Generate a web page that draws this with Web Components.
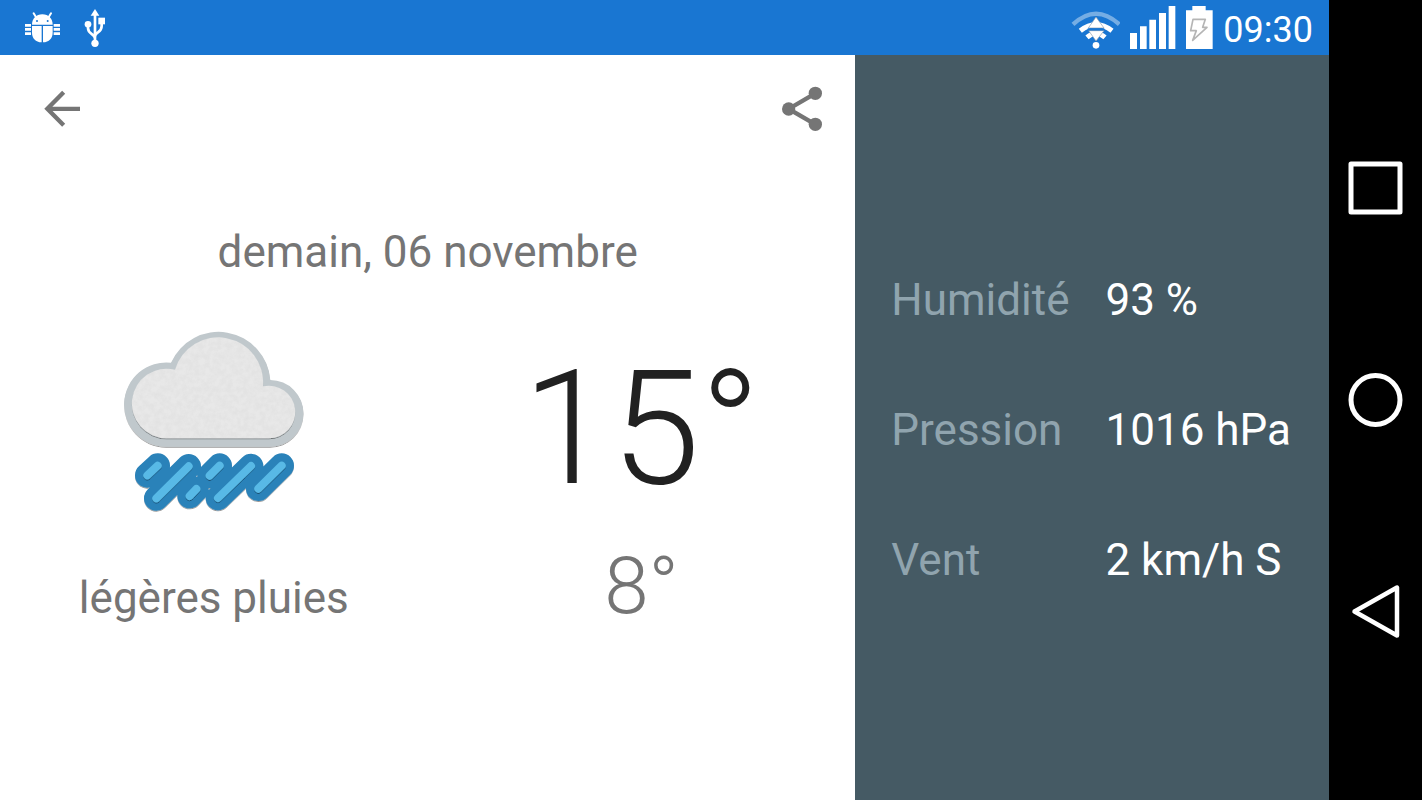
<!DOCTYPE html>
<html lang="fr">
<head>
<meta charset="utf-8">
<meta name="viewport" content="width=device-width, initial-scale=1">
<title>Météo</title>
<style>
    html, body {
        margin: 0;
        height: 100%;
    }
    body {
        font-family: Roboto, "Noto Sans", sans-serif;
        background: #fff;
    }
</style>
</head>
<body>
<weather-app></weather-app>

<script>
class StatusBar extends HTMLElement {
    connectedCallback() {
        this.attachShadow({ mode: 'open' });
        this.shadowRoot.innerHTML = `
            <style>
                :host {
                    display: flex;
                    justify-content: space-between;
                    align-items: center;
                    height: 55px;
                    padding: 0 16px 0 25px;
                    background: #1976d2;
                    color: #fff;
                }
                .group { display: flex; align-items: center; }
                .left { gap: 24px; }
                .right { gap: 10px; }
                svg { display: block; }
                time { font-size: 36px; line-height: 42px; padding-top: 5px; }
            </style>
            <div class="group left">
                <svg width="35" height="31" viewBox="75 36 105 93" fill="#fff" aria-hidden="true">
                    <path d="M101 40l8 13M153 40l-8 13" stroke="#fff" stroke-width="6" stroke-linecap="round"/>
                    <path d="M96 74c0-18 12-31 31-31s31 13 31 31z"/>
                    <circle cx="111" cy="63" r="3" fill="#1976d2"/>
                    <circle cx="143" cy="63" r="3" fill="#1976d2"/>
                    <path d="M96 78h29v49c-18-1-29-12-29-29zM129 78h29v20c0 17-11 28-29 29z"/>
                    <path d="M75 72h18v8H75zM75 84h18v8H75zM75 97h18v8H75zM161 72h19v8h-19zM161 84h19v8h-19zM161 97h19v8h-19z"/>
                </svg>
                <svg width="22" height="38" viewBox="252 27 66 114" fill="#fff" aria-hidden="true">
                    <path d="M285 27l13 20h-26z"/>
                    <path d="M285 42v88M264 76v8c0 20 21 16 21 32M305 66v12c0 22-20 16-20 32" fill="none" stroke="#fff" stroke-width="8"/>
                    <circle cx="264" cy="73" r="10"/>
                    <path d="M295 53h20v20h-20z"/>
                    <circle cx="285" cy="130" r="11"/>
                </svg>
            </div>
            <div class="group right">
                <svg width="49" height="43" viewBox="34 17 147 129" aria-hidden="true">
                    <path d="M40 72Q109 8 179 72" fill="none" stroke="#75ade4" stroke-width="13"/>
                    <path d="M62 91Q109 54 157 91" fill="none" stroke="#fff" stroke-width="15"/>
                    <path d="M82 111Q109 88 136 111" fill="none" stroke="#fff" stroke-width="15"/>
                    <path d="M109 50l24 33H86zM87 91h46l-24 31z" fill="#fff" stroke="#8a9cae" stroke-width="2"/>
                    <path d="M84 87h50" stroke="#1976d2" stroke-width="6"/>
                    <circle cx="109" cy="135" r="10" fill="#fff"/>
                </svg>
                <svg width="46" height="43" viewBox="207 18 138 129" fill="#fff" aria-hidden="true">
                    <path d="M207 99h21v48h-21zM237 79h20v68h-20zM265 59h20v88h-20zM294 39h21v108h-21zM323 18h20v129h-20z"/>
                </svg>
                <svg width="27" height="43" viewBox="381 18 81 129" aria-hidden="true">
                    <path d="M381 31h19V18h40v13h21v116h-80z" fill="#fff"/>
                    <path d="M402 58h37l-8 24h13l-43 39 11-29h-17z" fill="#fff" stroke="#b5b5b5" stroke-width="5" stroke-linejoin="round"/>
                </svg>
                <time datetime="09:30">09:30</time>
            </div>
        `;
    }
}

class WeatherToolbar extends HTMLElement {
    connectedCallback() {
        this.attachShadow({ mode: 'open' });
        this.shadowRoot.innerHTML = `
            <style>
                :host {
                    display: flex;
                    justify-content: space-between;
                    align-items: center;
                    padding: 0 32px 0 44px;
                }
                button {
                    background: none;
                    border: none;
                    padding: 0;
                    cursor: pointer;
                }
                svg { display: block; }
            </style>
            <button type="button" aria-label="Retour">
                <svg width="36" height="38" viewBox="132 270 108 114" fill="none" stroke="#757575" stroke-width="13">
                    <path d="M191 277l-49 49.500 49 49.500M143 326.500h97"/>
                </svg>
            </button>
            <button type="button" aria-label="Partager">
                <svg width="42" height="48" viewBox="63 45 126 144" fill="#757575">
                    <path d="M166 70L86 117l80 46" fill="none" stroke="#757575" stroke-width="13"/>
                    <circle cx="166" cy="70" r="20"/>
                    <circle cx="86" cy="117" r="20"/>
                    <circle cx="166" cy="163" r="20"/>
                </svg>
            </button>
        `;
    }
}

class RainIcon extends HTMLElement {
    connectedCallback() {
        // Each drop is drawn twice: wide dark outline, then thin light core
        const drops = 'M112 466L143 437M139 535L236 439M299 467L329 437M239 528L259 507M324 534L423 438M445 506L515 437';

        this.attachShadow({ mode: 'open' });
        this.shadowRoot.innerHTML = `
            <style>
                :host { display: block; }
                svg { display: block; }
            </style>
            <svg width="214" height="196" viewBox="-9 33 642 588" role="img" aria-label="Pluie">
                <defs>
                    <filter id="shadow" filterUnits="userSpaceOnUse" x="-9" y="33" width="642" height="588">
                        <feDropShadow dx="0" dy="3" stdDeviation="2" flood-color="#000" flood-opacity="0.4"/>
                    </filter>
                    <filter id="paper" filterUnits="userSpaceOnUse" x="-9" y="33" width="642" height="588" color-interpolation-filters="sRGB">
                        <feTurbulence type="fractalNoise" baseFrequency="0.06" numOctaves="3" result="noise"/>
                        <feColorMatrix in="noise" type="matrix" values="0 0 0 0 0.5  0 0 0 0 0.5  0 0 0 0 0.5  0.1 0 0 0 -0.03"/>
                        <feComposite operator="in" in2="SourceGraphic" result="grain"/>
                        <feMerge>
                            <feMergeNode in="SourceGraphic"/>
                            <feMergeNode in="grain"/>
                        </feMerge>
                    </filter>
                </defs>
                <path filter="url(#shadow)" fill="#c0c8cc" d="M168 380A126.400 126.400 0 1 1 183 128A156 156 0 0 1 481 180A100 100 0 0 1 480 380Z"/>
                <g filter="url(#shadow)">
                    <path filter="url(#paper)" fill="#e8e8e8" d="M170 355A104.500 104.500 0 1 1 195 149A135 135 0 0 1 459 199A79 79 0 1 1 477 355Z"/>
                </g>
                <g fill="none" stroke-linecap="round">
                    <path filter="url(#shadow)" stroke="#2b82b9" stroke-width="74" d="${drops}"/>
                    <path filter="url(#shadow)" stroke="#58b9e6" stroke-width="24" d="${drops}"/>
                </g>
            </svg>
        `;
    }
}

class DayForecast extends HTMLElement {
    connectedCallback() {
        this.attachShadow({ mode: 'open' });
        this.shadowRoot.innerHTML = `
            <style>
                :host {
                    display: grid;
                    grid-template-rows: 108px 1fr 104px;
                    background: #fff;
                    color: #757575;
                }
                .forecast {
                    align-self: center;
                    display: grid;
                    grid-template-columns: 1fr 1fr;
                    justify-items: center;
                    font-size: 44px;
                    line-height: 52px;
                }
                .date {
                    grid-column: 1 / -1;
                    margin: 0 0 53px;
                    font-size: inherit;
                    font-weight: 400;
                }
                .icon, .max { align-self: center; }
                .max {
                    font-size: 160px;
                    line-height: 188px;
                    font-weight: 300;
                    color: #212121;
                }
                .text, .min {
                    align-self: baseline;
                    margin-top: 12px;
                }
                .min {
                    font-size: 80px;
                    line-height: 94px;
                    font-weight: 300;
                }
            </style>
            <weather-toolbar></weather-toolbar>
            <div class="forecast">
                <h1 class="date"><slot name="date"></slot></h1>
                <rain-icon class="icon"></rain-icon>
                <div class="max"><slot name="max"></slot></div>
                <div class="text"><slot name="text"></slot></div>
                <div class="min"><slot name="min"></slot></div>
            </div>
        `;
    }
}

class WeatherDetails extends HTMLElement {
    connectedCallback() {
        this.attachShadow({ mode: 'open' });
        this.shadowRoot.innerHTML = `
            <style>
                :host {
                    display: grid;
                    align-content: center;
                    padding: 5px 38px 0 36px;
                    background: #455a64;
                }
                dl {
                    display: grid;
                    grid-template-columns: auto auto;
                    gap: 78px 36px;
                    margin: 0;
                    font-size: 44px;
                    line-height: 52px;
                    white-space: nowrap;
                }
                dt { color: #90a4ae; }
                dd { margin: 0; color: #fff; }
            </style>
            <dl>
                <dt>Humidité</dt><dd>93 %</dd>
                <dt>Pression</dt><dd>1016 hPa</dd>
                <dt>Vent</dt><dd>2 km/h S</dd>
            </dl>
        `;
    }
}

class SystemNav extends HTMLElement {
    connectedCallback() {
        this.attachShadow({ mode: 'open' });
        this.shadowRoot.innerHTML = `
            <style>
                :host {
                    display: flex;
                    flex-direction: column;
                    justify-content: center;
                    align-items: center;
                    gap: 156px;
                    background: #000;
                }
                button {
                    background: none;
                    border: none;
                    padding: 0;
                    cursor: pointer;
                }
                svg { display: block; }
            </style>
            <button type="button" aria-label="Applications récentes">
                <svg width="55" height="56" viewBox="0 0 55 56" fill="none" stroke="#fff" stroke-width="5" stroke-linejoin="round">
                    <path d="M3 4h49v48H3z"/>
                </svg>
            </button>
            <button type="button" aria-label="Accueil">
                <svg width="55" height="56" viewBox="0 0 55 56" fill="none" stroke="#fff" stroke-width="5">
                    <circle cx="27.500" cy="28" r="24.500"/>
                </svg>
            </button>
            <button type="button" aria-label="Retour">
                <svg width="55" height="56" viewBox="0 0 55 56" fill="none" stroke="#fff" stroke-width="4.500" stroke-linejoin="round">
                    <path d="M49 3.500v48L6.500 27.500z"/>
                </svg>
            </button>
        `;
    }
}

class WeatherApp extends HTMLElement {
    connectedCallback() {
        this.attachShadow({ mode: 'open' });
        this.shadowRoot.innerHTML = `
            <style>
                :host {
                    display: grid;
                    grid-template-columns: 1fr 93px;
                    min-height: 100%;
                }
                .screen {
                    display: grid;
                    grid-template-rows: auto 1fr;
                }
                main {
                    display: grid;
                    grid-template-columns: 1fr auto;
                }
            </style>
            <div class="screen">
                <status-bar></status-bar>
                <main>
                    <day-forecast>
                        <span slot="date">demain, 06 novembre</span>
                        <span slot="max">15°</span>
                        <span slot="text">légères pluies</span>
                        <span slot="min">8°</span>
                    </day-forecast>
                    <weather-details></weather-details>
                </main>
            </div>
            <system-nav></system-nav>
        `;
    }
}

customElements.define('status-bar', StatusBar);
customElements.define('weather-toolbar', WeatherToolbar);
customElements.define('rain-icon', RainIcon);
customElements.define('day-forecast', DayForecast);
customElements.define('weather-details', WeatherDetails);
customElements.define('system-nav', SystemNav);
customElements.define('weather-app', WeatherApp);
</script>
</body>
</html>
